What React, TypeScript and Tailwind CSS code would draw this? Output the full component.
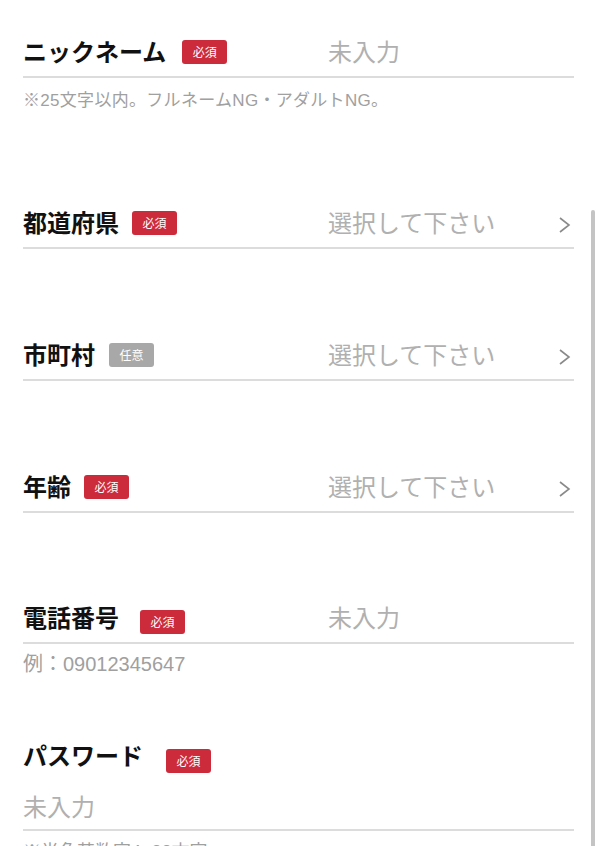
import React from 'react';

const jp = { fontFamily: '"Noto Sans CJK JP", "Noto Sans", sans-serif' };
const hintFont = { fontFamily: '"Liberation Sans", "Noto Sans CJK JP", sans-serif' };

function Badge({ optional }: { optional?: boolean }) {
  return (
    <span
      className={
        'inline-flex h-[24px] w-[45px] shrink-0 items-center justify-center rounded-[3px] text-[12px] text-white ' +
        (optional ? 'bg-[#a8a8a8]' : 'bg-[#cc2b3c]')
      }
    >
      {optional ? '任意' : '必須'}
    </span>
  );
}

function Chevron() {
  return (
    <svg width="14" height="18" viewBox="0 0 14 18" className="mr-[2px] mt-[6px] shrink-0">
      <polyline points="2,2 11,9 2,16" fill="none" stroke="#8a8a8a" strokeWidth="1.6" />
    </svg>
  );
}

function FieldRow({
  label,
  gap,
  optional,
  value,
  select,
  className,
}: {
  label: string;
  gap: string;
  optional?: boolean;
  value: string;
  select?: boolean;
  className?: string;
}) {
  return (
    <div className={'flex h-[50px] items-center border-b-2 border-[#dcdcdc] pb-[2px] ' + (className ?? '')}>
      <div className="flex w-[305px] shrink-0 items-center">
        <span className="text-[24px] font-bold text-[#111]">{label}</span>
        <span className={gap}>
          <Badge optional={optional} />
        </span>
      </div>
      <span className="flex-1 text-[24px] text-[#b0b0b0]">{value}</span>
      {select && <Chevron />}
    </div>
  );
}

function Hint({ children, className }: { children: React.ReactNode; className?: string }) {
  return (
    <p className={'leading-none text-[#a0a0a0] ' + (className ?? '')} style={hintFont}>
      {children}
    </p>
  );
}

export default function App() {
  return (
    <div className="relative h-[846px] overflow-hidden bg-white pl-[23px] pr-[26px]" style={jp}>
      <FieldRow label="ニックネーム" gap="ml-[16px]" value="未入力" className="mt-[28px]" />
      <Hint className="mt-[14px] text-[17px] tracking-[0.3px]">※25文字以内。フルネームNG・アダルトNG。</Hint>

      <FieldRow label="都道府県" gap="ml-[13px]" value="選択して下さい" select className="mt-[90px]" />
      <FieldRow label="市町村" gap="ml-[14px]" optional value="選択して下さい" select className="mt-[82px]" />
      <FieldRow label="年齢" gap="ml-[13px]" value="選択して下さい" select className="mt-[82px]" />

      <FieldRow label="電話番号" gap="ml-[21px] mt-[8px]" value="未入力" className="mt-[81px]" />
      <Hint className="mt-[10px] text-[20px]">例：09012345647</Hint>

      <div className="mt-[63px] flex items-center">
        <span className="text-[24px] font-bold text-[#111]">パスワード</span>
        <span className="ml-[23px] mt-[10px]">
          <Badge />
        </span>
      </div>
      <div className="mt-[12px] flex h-[46px] items-center border-b-2 border-[#dcdcdc] pb-[2px]">
        <span className="text-[24px] text-[#b0b0b0]">未入力</span>
      </div>
      <Hint className="mt-[12px] text-[18px]">※半角英数字4~32文字</Hint>

      <div className="absolute right-[5px] top-[210px] h-[640px] w-[4px] rounded-full bg-[#c4c4c4]" />
    </div>
  );
}
